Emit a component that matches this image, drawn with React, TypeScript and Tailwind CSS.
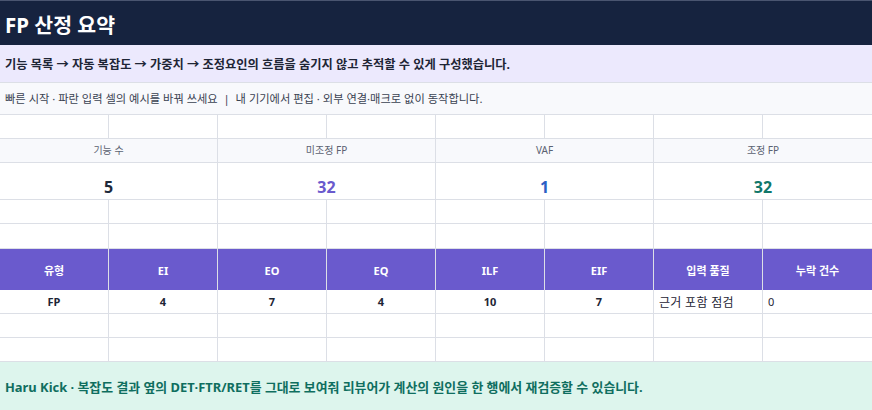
const font = "font-['Noto_Sans','Noto_Sans_CJK_KR',sans-serif]";

const kpis = [
  { label: '기능 수', value: '5', color: 'text-[#1e293b]' },
  { label: '미조정 FP', value: '32', color: 'text-[#6a5acd]' },
  { label: 'VAF', value: '1', color: 'text-[#2b5fc4]' },
  { label: '조정 FP', value: '32', color: 'text-[#11776a]' },
];

const headers = ['유형', 'EI', 'EO', 'EQ', 'ILF', 'EIF', '입력 품질', '누락 건수'];

const EmptyRow = ({ h = 'h-6' }: { h?: string }) => (
  <div className={`grid grid-cols-8 ${h} border-b border-[#dcdfe6] bg-white`}>
    {Array.from({ length: 8 }).map((_, i) => (
      <div key={i} className={i < 7 ? 'border-r border-[#dcdfe6]' : ''} />
    ))}
  </div>
);

const App = () => {
  return (
    <div className={`w-[872px] h-[410px] overflow-hidden bg-white ${font}`}>
      <div className="h-[45px] bg-[#16233f] border-t border-[#4a5570] flex items-center px-[5px]">
        <h1 className="text-[20.5px] font-bold text-white leading-none pt-[5px]">FP 산정 요약</h1>
      </div>
      <div className="h-[38px] bg-[#ece9fd] border-b border-[#dcdfe6] flex items-center px-[5px] pt-[3px]">
        <p className="text-[12.25px] font-bold text-[#1e2535]">기능 목록 → 자동 복잡도 → 가중치 → 조정요인의 흐름을 숨기지 않고 추적할 수 있게 구성했습니다.</p>
      </div>
      <div className="h-[32px] bg-[#f8f9fc] border-b border-[#dcdfe6] flex items-center px-[5px] pt-[1px]">
        <p className="text-[11.25px] text-[#3a4252]">빠른 시작 · 파란 입력 셀의 예시를 바꿔 쓰세요 &nbsp;|&nbsp; 내 기기에서 편집 · 외부 연결·매크로 없이 동작합니다.</p>
      </div>
      <EmptyRow />
      <div className="grid grid-cols-4 h-6 border-b border-[#dcdfe6] bg-[#f8f9fc]">
        {kpis.map((k, i) => (
          <div key={k.label} className={`flex items-center justify-center text-[10px] text-[#5b6272] ${i < 3 ? 'border-r border-[#dcdfe6]' : ''}`}>{k.label}</div>
        ))}
      </div>
      <div className="grid grid-cols-4 h-[37px] border-b border-[#dcdfe6] bg-white">
        {kpis.map((k, i) => (
          <div key={k.label} className={`flex items-center justify-center pt-[12px] text-[16px] font-bold ${k.color} ${i < 3 ? 'border-r border-[#dcdfe6]' : ''}`}>{k.value}</div>
        ))}
      </div>
      <EmptyRow />
      <EmptyRow h="h-[25px]" />
      <div className="grid grid-cols-8 h-[41px] bg-[#6a5acd]">
        {headers.map((h, i) => (
          <div key={h} className={`flex items-center justify-center pt-[3px] text-[11px] font-bold text-white ${i < 7 ? 'border-r border-[#dcdfe6]' : ''}`}>{h}</div>
        ))}
      </div>
      <div className="grid grid-cols-8 h-6 border-b border-[#dcdfe6] bg-white text-[11px] text-[#1e2535]">
        {['FP', '4', '7', '4', '10', '7'].map((v, i) => (
          <div key={i} className="flex items-center justify-center pt-[2px] font-bold border-r border-[#dcdfe6]">{v}</div>
        ))}
        <div className="flex items-center px-[5px] pt-[2px] text-[12px] tracking-[0.3px] border-r border-[#dcdfe6]">근거 포함 점검</div>
        <div className="flex items-center px-[5px] pt-[2px] text-[11px]">0</div>
      </div>
      <EmptyRow />
      <EmptyRow />
      <div className="h-[48px] bg-[#ddf5ed] flex items-center px-[5px] pt-[4px]">
        <p className="text-[12.9px] font-bold text-[#0f6e5f]">Haru Kick · 복잡도 결과 옆의 DET·FTR/RET를 그대로 보여줘 리뷰어가 계산의 원인을 한 행에서 재검증할 수 있습니다.</p>
      </div>
    </div>
  );
};

export default App;
